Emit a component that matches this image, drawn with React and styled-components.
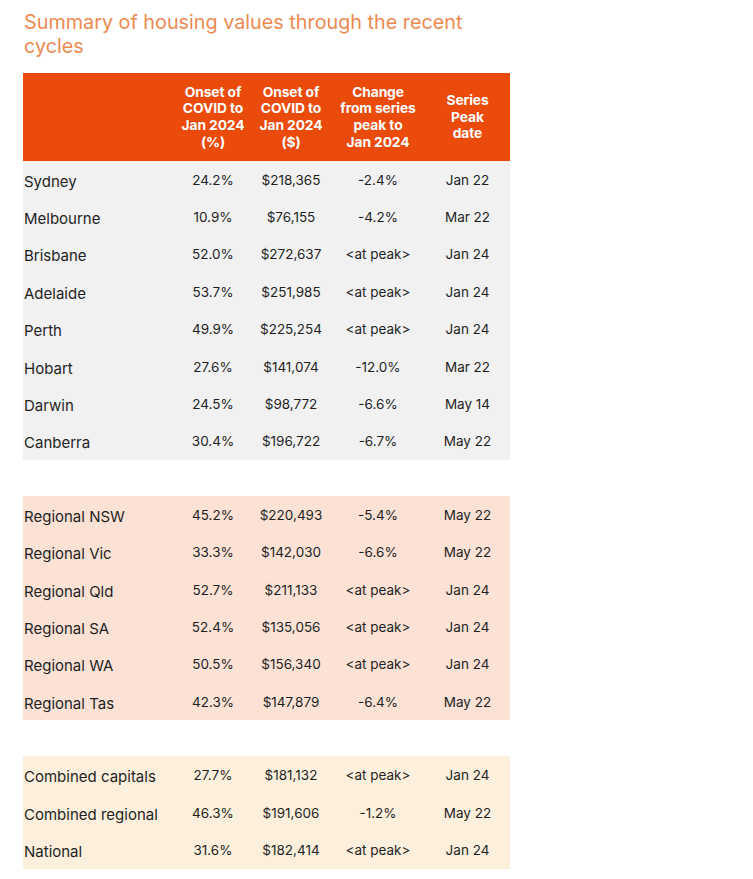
import React from "react";
import styled, { createGlobalStyle } from "styled-components";

const Global = createGlobalStyle`
  html, body { margin: 0; padding: 0; background: #fff; }
  body { font-family: Inter, "Open Sans", sans-serif; }
`;

const Page = styled.div`
  padding: 10px 0 0 23px;
  width: 487px;
`;

const Title = styled.h1`
  margin: 0 0 15px 1px;
  font-size: 19.8px;
  line-height: 24px;
  font-weight: 400;
  color: #ec8a50;
  width: 480px;
`;

const Table = styled.table`
  width: 487px;
  border-collapse: collapse;
  table-layout: fixed;
`;

const HeadRow = styled.tr`
  background: #ea4a0a;
  height: 88px;
`;

const Th = styled.th`
  color: #fff;
  font-weight: 700;
  font-size: 13.8px;
  line-height: 16.6px;
  text-align: center;
  vertical-align: middle;
  padding: 0;
  letter-spacing: -0.1px;
`;

const bg = { city: "#f1f1f1", regional: "#fbe2d5", combined: "#fcf0dc", gap: "#ffffff" };

const Row = styled.tr`
  background: ${(p) => bg[p.$group]};
  height: ${(p) => (p.$group === "gap" ? "36px" : "37.4px")};
`;

const Label = styled.td`
  padding: 3px 0 0 1px;
  font-size: 15px;
  color: #1f1f1f;
  text-align: left;
  vertical-align: middle;
  white-space: nowrap;
`;

const Cell = styled.td`
  padding: 0;
  font-size: 13.5px;
  color: #1f1f1f;
  text-align: center;
  vertical-align: middle;
  white-space: nowrap;
`;

const groups = [
  {
    key: "city",
    rows: [
      ["Sydney", "24.2%", "$218,365", "-2.4%", "Jan 22"],
      ["Melbourne", "10.9%", "$76,155", "-4.2%", "Mar 22"],
      ["Brisbane", "52.0%", "$272,637", "<at peak>", "Jan 24"],
      ["Adelaide", "53.7%", "$251,985", "<at peak>", "Jan 24"],
      ["Perth", "49.9%", "$225,254", "<at peak>", "Jan 24"],
      ["Hobart", "27.6%", "$141,074", "-12.0%", "Mar 22"],
      ["Darwin", "24.5%", "$98,772", "-6.6%", "May 14"],
      ["Canberra", "30.4%", "$196,722", "-6.7%", "May 22"],
    ],
  },
  {
    key: "regional",
    rows: [
      ["Regional NSW", "45.2%", "$220,493", "-5.4%", "May 22"],
      ["Regional Vic", "33.3%", "$142,030", "-6.6%", "May 22"],
      ["Regional Qld", "52.7%", "$211,133", "<at peak>", "Jan 24"],
      ["Regional SA", "52.4%", "$135,056", "<at peak>", "Jan 24"],
      ["Regional WA", "50.5%", "$156,340", "<at peak>", "Jan 24"],
      ["Regional Tas", "42.3%", "$147,879", "-6.4%", "May 22"],
    ],
  },
  {
    key: "combined",
    rows: [
      ["Combined capitals", "27.7%", "$181,132", "<at peak>", "Jan 24"],
      ["Combined regional", "46.3%", "$191,606", "-1.2%", "May 22"],
      ["National", "31.6%", "$182,414", "<at peak>", "Jan 24"],
    ],
  },
];

export default function App() {
  return (
    <>
      <Global />
      <Page>
        <Title>Summary of housing values through the recent cycles</Title>
        <Table>
          <colgroup>
            <col style={{ width: 152 }} />
            <col style={{ width: 76 }} />
            <col style={{ width: 80 }} />
            <col style={{ width: 94 }} />
            <col style={{ width: 85 }} />
          </colgroup>
          <thead>
            <HeadRow>
              <Th />
              <Th>Onset of<br />COVID to<br />Jan 2024<br />(%)</Th>
              <Th>Onset of<br />COVID to<br />Jan 2024<br />($)</Th>
              <Th>Change<br />from series<br />peak to<br />Jan 2024</Th>
              <Th>Series<br />Peak<br />date</Th>
            </HeadRow>
          </thead>
          <tbody>
            {groups.map((g, gi) => (
              <React.Fragment key={g.key}>
                {gi > 0 && (
                  <Row $group="gap">
                    <Cell colSpan={5} />
                  </Row>
                )}
                {g.rows.map((r) => (
                  <Row key={r[0]} $group={g.key}>
                    <Label>{r[0]}</Label>
                    <Cell>{r[1]}</Cell>
                    <Cell>{r[2]}</Cell>
                    <Cell>{r[3]}</Cell>
                    <Cell>{r[4]}</Cell>
                  </Row>
                ))}
              </React.Fragment>
            ))}
          </tbody>
        </Table>
      </Page>
    </>
  );
}
